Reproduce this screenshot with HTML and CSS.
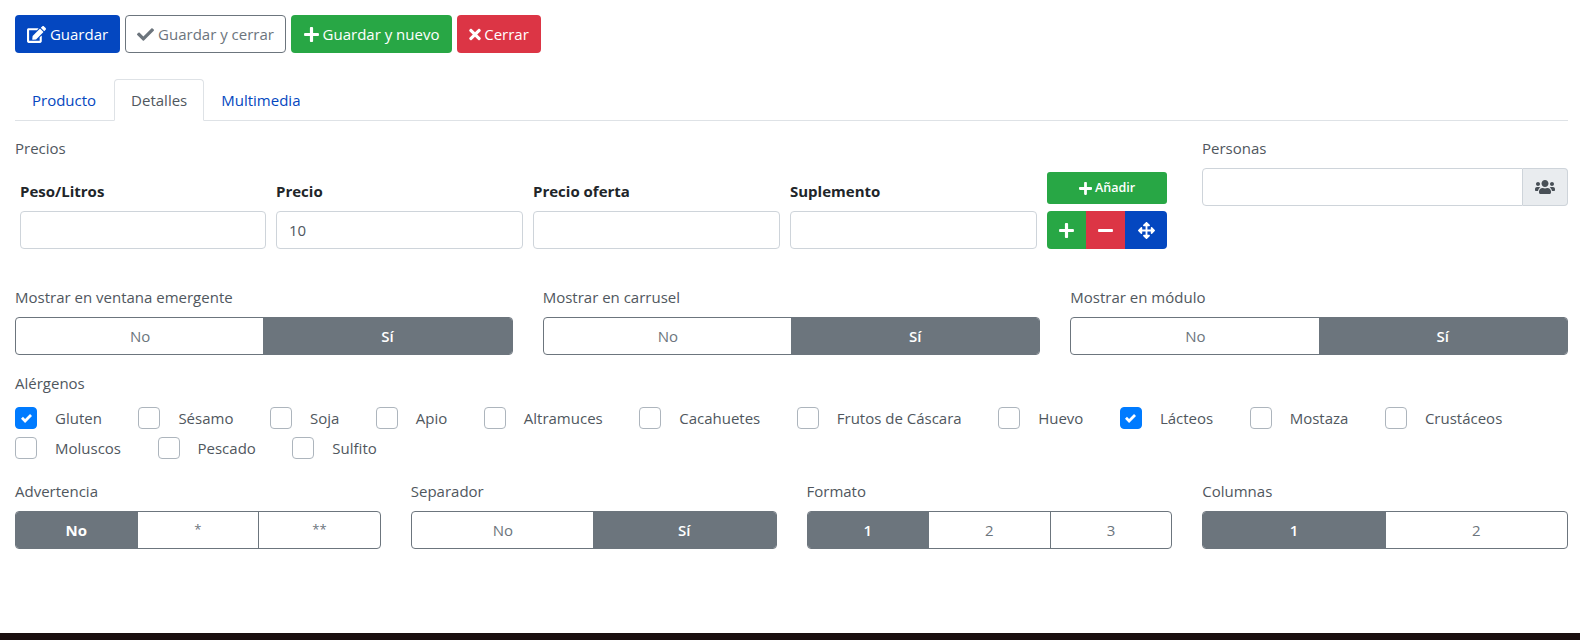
FILE: index.html
```html
<!DOCTYPE html>
<html lang="es">
<head>
<meta charset="utf-8">
<title>Producto</title>
<link rel="stylesheet" href="styles.css">
</head>
<body>
<svg class="defs" aria-hidden="true">
  <symbol id="i-edit" viewBox="0 0 576 512"><path d="M402.6 83.2l90.2 90.2c3.8 3.8 3.8 10 0 13.8L274.4 405.6l-92.8 10.3c-12.4 1.4-22.9-9.1-21.5-21.5l10.3-92.8L388.8 83.2c3.8-3.8 10-3.8 13.8 0zm162-22.9l-48.8-48.8c-15.2-15.2-39.9-15.2-55.2 0l-35.4 35.4c-3.8 3.8-3.8 10 0 13.8l90.2 90.2c3.8 3.8 10 3.8 13.8 0l35.4-35.4c15.2-15.3 15.2-40 0-55.2zM384 346.2V448H64V128h229.8c3.2 0 6.2-1.3 8.5-3.5l40-40c7.6-7.6 2.2-20.5-8.5-20.5H48C21.5 64 0 85.5 0 112v352c0 26.5 21.5 48 48 48h352c26.5 0 48-21.5 48-48V306.2c0-10.7-12.9-16-20.5-8.5l-40 40c-2.2 2.3-3.5 5.3-3.5 8.5z"/></symbol>
  <symbol id="i-check" viewBox="0 0 512 512"><path d="M173.898 439.404l-166.4-166.4c-9.997-9.997-9.997-26.206 0-36.204l36.203-36.204c9.997-9.998 26.207-9.998 36.204 0L192 312.69 432.095 72.596c9.997-9.997 26.207-9.997 36.204 0l36.203 36.204c9.997 9.997 9.997 26.206 0 36.204l-294.4 294.401c-9.998 9.997-26.207 9.997-36.204-.001z"/></symbol>
  <symbol id="i-tick" viewBox="0 0 8 8"><path d="M6.564.75l-3.59 3.612-1.538-1.55L0 4.26 2.974 7.25 8 2.193z"/></symbol>
  <symbol id="i-plus" viewBox="0 0 448 512"><path d="M416 208H272V64c0-17.67-14.33-32-32-32h-32c-17.67 0-32 14.33-32 32v144H32c-17.67 0-32 14.33-32 32v32c0 17.67 14.33 32 32 32h144v144c0 17.67 14.33 32 32 32h32c17.67 0 32-14.33 32-32V304h144c17.67 0 32-14.33 32-32v-32c0-17.67-14.33-32-32-32z"/></symbol>
  <symbol id="i-minus" viewBox="0 0 448 512"><path d="M416 208H32c-17.67 0-32 14.33-32 32v32c0 17.67 14.33 32 32 32h384c17.67 0 32-14.33 32-32v-32c0-17.67-14.33-32-32-32z"/></symbol>
  <symbol id="i-times" viewBox="0 0 352 512"><path d="M242.72 256l100.07-100.07c12.28-12.28 12.28-32.19 0-44.48l-22.24-22.24c-12.28-12.28-32.19-12.28-44.48 0L176 189.28 75.93 89.21c-12.28-12.28-32.19-12.28-44.48 0L9.21 111.45c-12.28 12.28-12.28 32.19 0 44.48L109.28 256 9.21 356.07c-12.28 12.28-12.28 32.19 0 44.48l22.24 22.24c12.28 12.28 32.2 12.28 44.48 0L176 322.72l100.07 100.07c12.28 12.28 32.2 12.28 44.48 0l22.24-22.24c12.28-12.28 12.28-32.19 0-44.48L242.72 256z"/></symbol>
  <symbol id="i-users" viewBox="0 0 640 512"><path d="M96 224c35.3 0 64-28.7 64-64s-28.7-64-64-64-64 28.7-64 64 28.7 64 64 64zm448 0c35.3 0 64-28.7 64-64s-28.7-64-64-64-64 28.7-64 64 28.7 64 64 64zm32 32h-64c-17.6 0-33.5 7.1-45.1 18.6 40.3 22.1 68.9 62 75.1 109.4h66c17.7 0 32-14.3 32-32v-32c0-35.3-28.7-64-64-64zm-256 0c61.9 0 112-50.1 112-112S381.9 32 320 32 208 82.1 208 144s50.1 112 112 112zm76.8 32h-8.3c-20.8 10-43.9 16-68.5 16s-47.6-6-68.5-16h-8.3C179.6 288 128 339.6 128 403.2V432c0 26.5 21.5 48 48 48h288c26.5 0 48-21.5 48-48v-28.8c0-63.6-51.6-115.2-115.2-115.2zm-223.7-13.4C161.5 263.1 145.6 256 128 256H64c-35.3 0-64 28.7-64 64v32c0 17.7 14.3 32 32 32h65.9c6.3-47.4 34.9-87.3 75.2-109.4z"/></symbol>
  <symbol id="i-move" viewBox="0 0 512 512"><path d="M352.201 425.775l-79.196 79.196c-9.373 9.373-24.568 9.373-33.941 0l-79.196-79.196c-15.119-15.119-4.411-40.971 16.971-40.97h51.162L228 284H127.196v51.162c0 21.382-25.851 32.09-40.971 16.971L7.029 272.937c-9.373-9.373-9.373-24.569 0-33.941L86.225 159.8c15.119-15.119 40.971-4.411 40.971 16.971V228H228V127.196h-51.23c-21.382 0-32.09-25.851-16.971-40.971l79.196-79.196c9.373-9.373 24.568-9.373 33.941 0l79.196 79.196c15.119 15.119 4.411 40.971-16.971 40.971h-51.162V228h100.804v-51.162c0-21.382 25.851-32.09 40.97-16.971l79.196 79.196c9.373 9.373 9.373 24.569 0 33.941L425.773 352.2c-15.119 15.119-40.971 4.411-40.97-16.971V284H284v100.804h51.23c21.382 0 32.09 25.851 16.971 40.971z"/></symbol>
</svg>
<main class="page">
  <div class="toolbar">
    <button class="btn btn-blue"><svg class="ico ico-edit"><use href="#i-edit"/></svg>Guardar</button>
    <button class="btn btn-outline"><svg class="ico ico-check"><use href="#i-check"/></svg>Guardar y cerrar</button>
    <button class="btn btn-green"><svg class="ico ico-plus"><use href="#i-plus"/></svg>Guardar y nuevo</button>
    <button class="btn btn-red"><svg class="ico ico-times"><use href="#i-times"/></svg>Cerrar</button>
  </div>
  <nav class="tabs">
    <a class="tab tab-first">Producto</a>
    <a class="tab tab-active">Detalles</a>
    <a class="tab">Multimedia</a>
  </nav>
  <section class="prices-row">
    <div class="prices">
      <div class="label">Precios</div>
      <div class="price-grid">
        <div class="th">Peso/Litros</div>
        <div class="th">Precio</div>
        <div class="th">Precio oferta</div>
        <div class="th">Suplemento</div>
        <button class="add"><svg class="ico ico-add"><use href="#i-plus"/></svg>Añadir</button>
        <input class="input" type="text">
        <input class="input" type="text" value="10">
        <input class="input" type="text">
        <input class="input" type="text">
        <div class="row-actions">
          <button class="act act-green"><svg class="ico ico-act"><use href="#i-plus"/></svg></button>
          <button class="act act-red"><svg class="ico ico-act"><use href="#i-minus"/></svg></button>
          <button class="act act-blue"><svg class="ico ico-move"><use href="#i-move"/></svg></button>
        </div>
      </div>
    </div>
    <div class="people">
      <div class="label">Personas</div>
      <div class="input-group">
        <input class="input input-joined" type="text">
        <span class="addon"><svg class="ico ico-users"><use href="#i-users"/></svg></span>
      </div>
    </div>
  </section>
  <section class="three">
    <div>
      <div class="label">Mostrar en ventana emergente</div>
      <div class="toggle"><span class="opt">No</span><span class="opt opt-on">Sí</span></div>
    </div>
    <div>
      <div class="label">Mostrar en carrusel</div>
      <div class="toggle"><span class="opt">No</span><span class="opt opt-on">Sí</span></div>
    </div>
    <div>
      <div class="label">Mostrar en módulo</div>
      <div class="toggle"><span class="opt">No</span><span class="opt opt-on">Sí</span></div>
    </div>
  </section>
  <section class="allergens">
    <div class="label">Alérgenos</div>
    <div class="checks">
      <span class="chk"><i class="box box-on"><svg class="ico ico-tick"><use href="#i-tick"/></svg></i>Gluten</span>
      <span class="chk"><i class="box"></i>Sésamo</span>
      <span class="chk"><i class="box"></i>Soja</span>
      <span class="chk"><i class="box"></i>Apio</span>
      <span class="chk"><i class="box"></i>Altramuces</span>
      <span class="chk"><i class="box"></i>Cacahuetes</span>
      <span class="chk"><i class="box"></i>Frutos de Cáscara</span>
      <span class="chk"><i class="box"></i>Huevo</span>
      <span class="chk"><i class="box box-on"><svg class="ico ico-tick"><use href="#i-tick"/></svg></i>Lácteos</span>
      <span class="chk"><i class="box"></i>Mostaza</span>
      <span class="chk"><i class="box"></i>Crustáceos</span>
      <span class="chk"><i class="box"></i>Moluscos</span>
      <span class="chk"><i class="box"></i>Pescado</span>
      <span class="chk"><i class="box"></i>Sulfito</span>
    </div>
  </section>
  <section class="four">
    <div>
      <div class="label">Advertencia</div>
      <div class="toggle"><span class="opt opt-on opt-strong">No</span><span class="opt opt-star">*</span><span class="opt opt-star">**</span></div>
    </div>
    <div>
      <div class="label">Separador</div>
      <div class="toggle"><span class="opt">No</span><span class="opt opt-on">Sí</span></div>
    </div>
    <div>
      <div class="label">Formato</div>
      <div class="toggle"><span class="opt opt-on">1</span><span class="opt">2</span><span class="opt">3</span></div>
    </div>
    <div>
      <div class="label">Columnas</div>
      <div class="toggle"><span class="opt opt-on">1</span><span class="opt">2</span></div>
    </div>
  </section>
</main>
<footer class="footer"></footer>
</body>
</html>
```
FILE: styles.css
```css
* { box-sizing: border-box; }
html, body { margin: 0; height: 640px; overflow: hidden; background: #fff; }
body {
  font-family: "Open Sans", "Noto Sans", sans-serif;
  font-size: 15px;
  line-height: 21px;
  color: #50575e;
  position: relative;
}
.defs { display: none; }
.ico { display: inline-block; fill: currentColor; flex: none; }
.page { padding: 15px 12px 0 15px; }

.toolbar { display: flex; gap: 5px; height: 38px; }
.btn {
  display: inline-flex; align-items: center; justify-content: center;
  height: 38px; padding: 0; border: 1px solid transparent; border-radius: 4px;
  font: inherit; color: #fff; cursor: pointer;
}
.btn-blue { background: #0447c0; width: 105px; }
.btn-outline { background: #fff; border-color: #6c757d; color: #6c757d; width: 161px; }
.btn-green { background: #28a745; width: 161px; }
.btn-red { background: #dc3545; width: 84px; }
.ico-edit { width: 19px; height: 17px; margin-right: 4px; }
.ico-check { width: 17px; height: 17px; margin-right: 4px; }
.ico-plus { width: 15px; height: 17px; margin-right: 4px; }
.ico-times { width: 12px; height: 17px; margin-right: 3px; }

.tabs { display: flex; height: 42px; margin-top: 26px; border-bottom: 1px solid #dee2e6; }
.tab {
  display: block; height: 42px; padding: 10px 16px;
  border: 1px solid transparent; border-radius: 4px 4px 0 0; color: #0447c0;
}
.tab-first { padding-right: 17px; }
.tab-active { background: #fff; border-color: #dee2e6 #dee2e6 #fff; color: #50575e; }

.label { height: 21px; }

.prices-row { display: flex; gap: 30px; margin-top: 17px; }
.prices { flex: 0 0 1157px; }
.people { flex: 1; }
.price-grid {
  display: grid;
  grid-template-columns: 246px repeat(3, 247px) 120px;
  grid-template-rows: 32px 38px;
  column-gap: 10px; row-gap: 7px;
  padding: 13px 5px 0;
}
.th { align-self: center; font-weight: 700; color: #212529; padding-top: 6px; }
.add {
  display: inline-flex; align-items: center; justify-content: center;
  height: 32px; border: 0; border-radius: 3px; background: #28a745; color: #fff;
  font: 600 12.5px/18px "Open Sans", sans-serif;
}
.ico-add { width: 13px; height: 15px; margin-right: 3px; }
.input {
  display: block; width: 100%; height: 38px; padding: 6px 12px;
  border: 1px solid #ced4da; border-radius: 4px; background: #fff;
  font: inherit; color: #50575e; outline: 0;
}
.row-actions { display: flex; height: 38px; border-radius: 4px; overflow: hidden; }
.act { flex: 1; height: 38px; border: 0; padding: 0; color: #fff; display: flex; align-items: center; justify-content: center; }
.act-blue { flex: 0 0 42px; }
.act-green { background: #28a745; }
.act-red { background: #dc3545; }
.act-blue { background: #0447c0; }
.ico-act { width: 15px; height: 17px; }
.ico-move { width: 17px; height: 17px; }

.people .label { margin-bottom: 9px; }
.input-group { display: flex; height: 38px; }
.input-joined { flex: 1; border-radius: 4px 0 0 4px; }
.addon {
  flex: 0 0 45px; display: flex; align-items: center; justify-content: center;
  background: #e9ecef; border: 1px solid #ced4da; border-left: 0; border-radius: 0 4px 4px 0; color: #495057;
}
.ico-users { width: 20px; height: 16px; }

.three { display: grid; grid-template-columns: repeat(3, 1fr); column-gap: 30px; margin-top: 38px; }
.three .label, .four .label { margin-bottom: 9px; }
.toggle { display: flex; height: 38px; border: 1px solid #6c757d; border-radius: 4px; overflow: hidden; background: #fff; }
.opt { flex: 1 1 0; display: flex; align-items: center; justify-content: center; color: #6c757d; border-left: 1px solid #6c757d; }
.opt:first-child { border-left: 0; }
.opt-on { background: #6c757d; color: #fff; font-weight: 600; border-left: 0; }
.opt-strong { font-weight: 700; }
.opt-star { font-size: 13px; padding-bottom: 2px; }
.opt + .opt-on { margin-left: -1px; }

.allergens { margin-top: 18px; }
.checks { display: flex; flex-wrap: wrap; column-gap: 36.5px; row-gap: 8px; margin-top: 13px; }
.chk { display: flex; align-items: center; height: 22px; }
.box {
  display: flex; align-items: center; justify-content: center;
  width: 22px; height: 22px; margin-right: 18px; border: 1px solid #adb5bd; border-radius: 4px; background: #fff;
}
.box-on { background: #007bff; border-color: #007bff; color: #fff; }
.ico-tick { width: 11px; height: 11px; }

.four { display: grid; grid-template-columns: repeat(4, 1fr); column-gap: 30px; margin-top: 22px; }

.footer { position: absolute; left: 0; right: 0; top: 633px; height: 7px; background: #190e0e; }
```
